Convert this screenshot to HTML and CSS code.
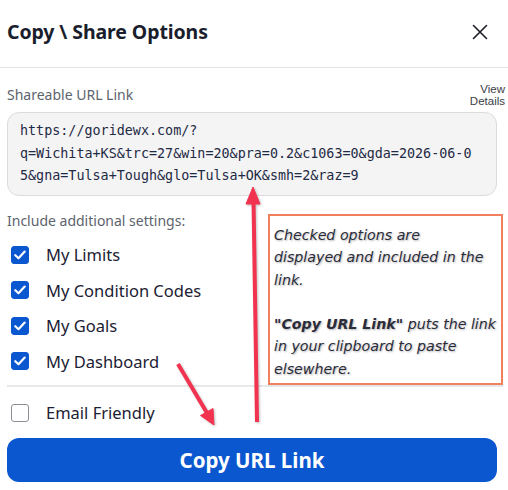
FILE: index.html
```html
<!DOCTYPE html>
<html lang="en">
<head>
<meta charset="utf-8">
<title>Copy \ Share Options</title>
<link rel="stylesheet" href="styles.css">
</head>
<body>
<div class="dialog">
  <header class="header">
    <h1 class="title">Copy \ Share Options</h1>
    <button class="close" aria-label="Close">
      <svg width="16" height="16" viewBox="0 0 16 16"><path d="M1.5 1.5 L14.5 14.5 M14.5 1.5 L1.5 14.5" stroke="#1b1d24" stroke-width="1.6" fill="none" stroke-linecap="round"/></svg>
    </button>
  </header>
  <main class="body">
    <div class="url-head">
      <span class="label">Shareable URL Link</span>
      <span class="details"><span>View</span><span>Details</span></span>
    </div>
    <div class="url-box">https://goridewx.com/?<br>q=Wichita+KS&amp;trc=27&amp;win=20&amp;pra=0.2&amp;c1063=0&amp;gda=2026-06-0<br>5&amp;gna=Tulsa+Tough&amp;glo=Tulsa+OK&amp;smh=2&amp;raz=9</div>
    <section class="settings">
      <div class="label settings-head">Include additional settings:</div>
      <label class="row"><span class="cb checked"><svg width="12" height="10" viewBox="0 0 12 10"><path d="M1.3 5.2 L4.5 8.2 L10.7 1.6" stroke="#fff" stroke-width="2.2" fill="none" stroke-linecap="round" stroke-linejoin="round"/></svg></span>My Limits</label>
      <label class="row"><span class="cb checked"><svg width="12" height="10" viewBox="0 0 12 10"><path d="M1.3 5.2 L4.5 8.2 L10.7 1.6" stroke="#fff" stroke-width="2.2" fill="none" stroke-linecap="round" stroke-linejoin="round"/></svg></span>My Condition Codes</label>
      <label class="row"><span class="cb checked"><svg width="12" height="10" viewBox="0 0 12 10"><path d="M1.3 5.2 L4.5 8.2 L10.7 1.6" stroke="#fff" stroke-width="2.2" fill="none" stroke-linecap="round" stroke-linejoin="round"/></svg></span>My Goals</label>
      <label class="row"><span class="cb checked"><svg width="12" height="10" viewBox="0 0 12 10"><path d="M1.3 5.2 L4.5 8.2 L10.7 1.6" stroke="#fff" stroke-width="2.2" fill="none" stroke-linecap="round" stroke-linejoin="round"/></svg></span>My Dashboard</label>
      <hr class="sep">
      <label class="row email"><span class="cb"></span>Email Friendly</label>
      <div class="note"><p>Checked options are<br>displayed and included in the<br>link.</p><p><b>"Copy URL Link"</b> puts the link<br>in your clipboard to paste<br>elsewhere.</p></div>
    </section>
    <button class="copy">Copy URL Link</button>
  </main>
  <svg class="arrows" width="508" height="490" viewBox="0 0 508 490">
    <g fill="#f2334f" stroke="#f2334f">
      <line x1="257" y1="422" x2="253.5" y2="200" stroke-width="4"/>
      <polygon points="253,187 246,204 260,204" stroke-width="1" stroke-linejoin="round"/>
      <line x1="178" y1="364" x2="207" y2="413" stroke-width="4"/>
      <polygon points="214,425 200.5,415.5 213,408.5" stroke-width="1" stroke-linejoin="round"/>
    </g>
  </svg>
</div>
</body>
</html>
```
FILE: styles.css
```css
* { box-sizing: border-box; }
html, body { margin: 0; padding: 0; background: #fff; }
body { font-family: "Noto Sans", "Open Sans", sans-serif; color: #1b1f2e; }
.dialog { position: relative; width: 508px; height: 490px; overflow: hidden; }
.header {
  height: 68px;
  display: flex;
  align-items: center;
  justify-content: space-between;
  padding: 0 20px 4px 7px;
  border-bottom: 1px solid #e4e4e6;
}
.title { margin: 0; font-size: 19.5px; font-weight: 700; color: #1a1e2c; letter-spacing: -0.1px; }
.close { border: 0; background: none; padding: 0; width: 16px; height: 16px; display: flex; }
.body { padding: 0 11px 0 7px; }
.url-head { display: flex; justify-content: space-between; align-items: center; margin-top: 15px; height: 24px; }
.label { font-size: 14px; color: #5d636d; line-height: 20px; }
.details { display: flex; flex-direction: column; align-items: flex-end; font-family: "Liberation Sans", Arial, sans-serif; font-size: 11.5px; line-height: 12.5px; color: #3a3d45; margin-right: -8px; }
.url-box {
  margin-top: 5px;
  height: 84px;
  background: #f4f4f5;
  border: 1px solid #dcdcde;
  border-radius: 12px;
  padding: 7px 12px;
  font-family: "DejaVu Sans Mono", "Liberation Mono", monospace;
  font-size: 13.4px;
  line-height: 22.5px;
  color: #1f2a44;
  white-space: nowrap;
}
.settings { position: relative; margin-top: 15px; }
.settings-head { height: 20px; margin-bottom: 6px; }
.row { display: flex; align-items: center; height: 35.5px; font-size: 16.5px; color: #1b2133; }
.cb {
  width: 18px; height: 18px; margin: 0 17px 0 4px;
  border: 1.5px solid #8a8d93; border-radius: 3px; background: #fff;
  display: flex; align-items: center; justify-content: center;
}
.cb.checked { background: #0b57d0; border-color: #0b57d0; }
.sep { border: 0; border-top: 2px solid #e8e8ea; margin: 6px 0 8px; }
.email { height: 35px; }
.note {
  position: absolute;
  left: 261px; top: 3px;
  width: 235px; height: 171px;
  border: 2px solid #f0805e;
  background: #fff;
  padding: 8px 4px;
  font-family: "DejaVu Sans", sans-serif;
  font-style: italic;
  font-size: 14.2px;
  line-height: 22.3px;
  color: #2a2c3a;
  text-shadow: 1px 1px 2px rgba(0,0,0,0.3);
  box-shadow: 0 2px 0 #e6e6e8;
  white-space: nowrap;
}
.note p { margin: 0 0 22.3px; }
.note p:last-child { margin-bottom: 0; }
.note b { font-weight: 700; }
.copy {
  display: block; width: 100%; height: 44px; margin-top: 8px;
  border: 0; border-radius: 12px; background: #0b57d0;
  color: #fff; font-family: "Noto Sans", "Open Sans", sans-serif; font-weight: 700; font-size: 20.5px;
}
.arrows { position: absolute; left: 0; top: 0; pointer-events: none; filter: drop-shadow(1px 1px 1px rgba(0,0,0,0.25)); }
```
